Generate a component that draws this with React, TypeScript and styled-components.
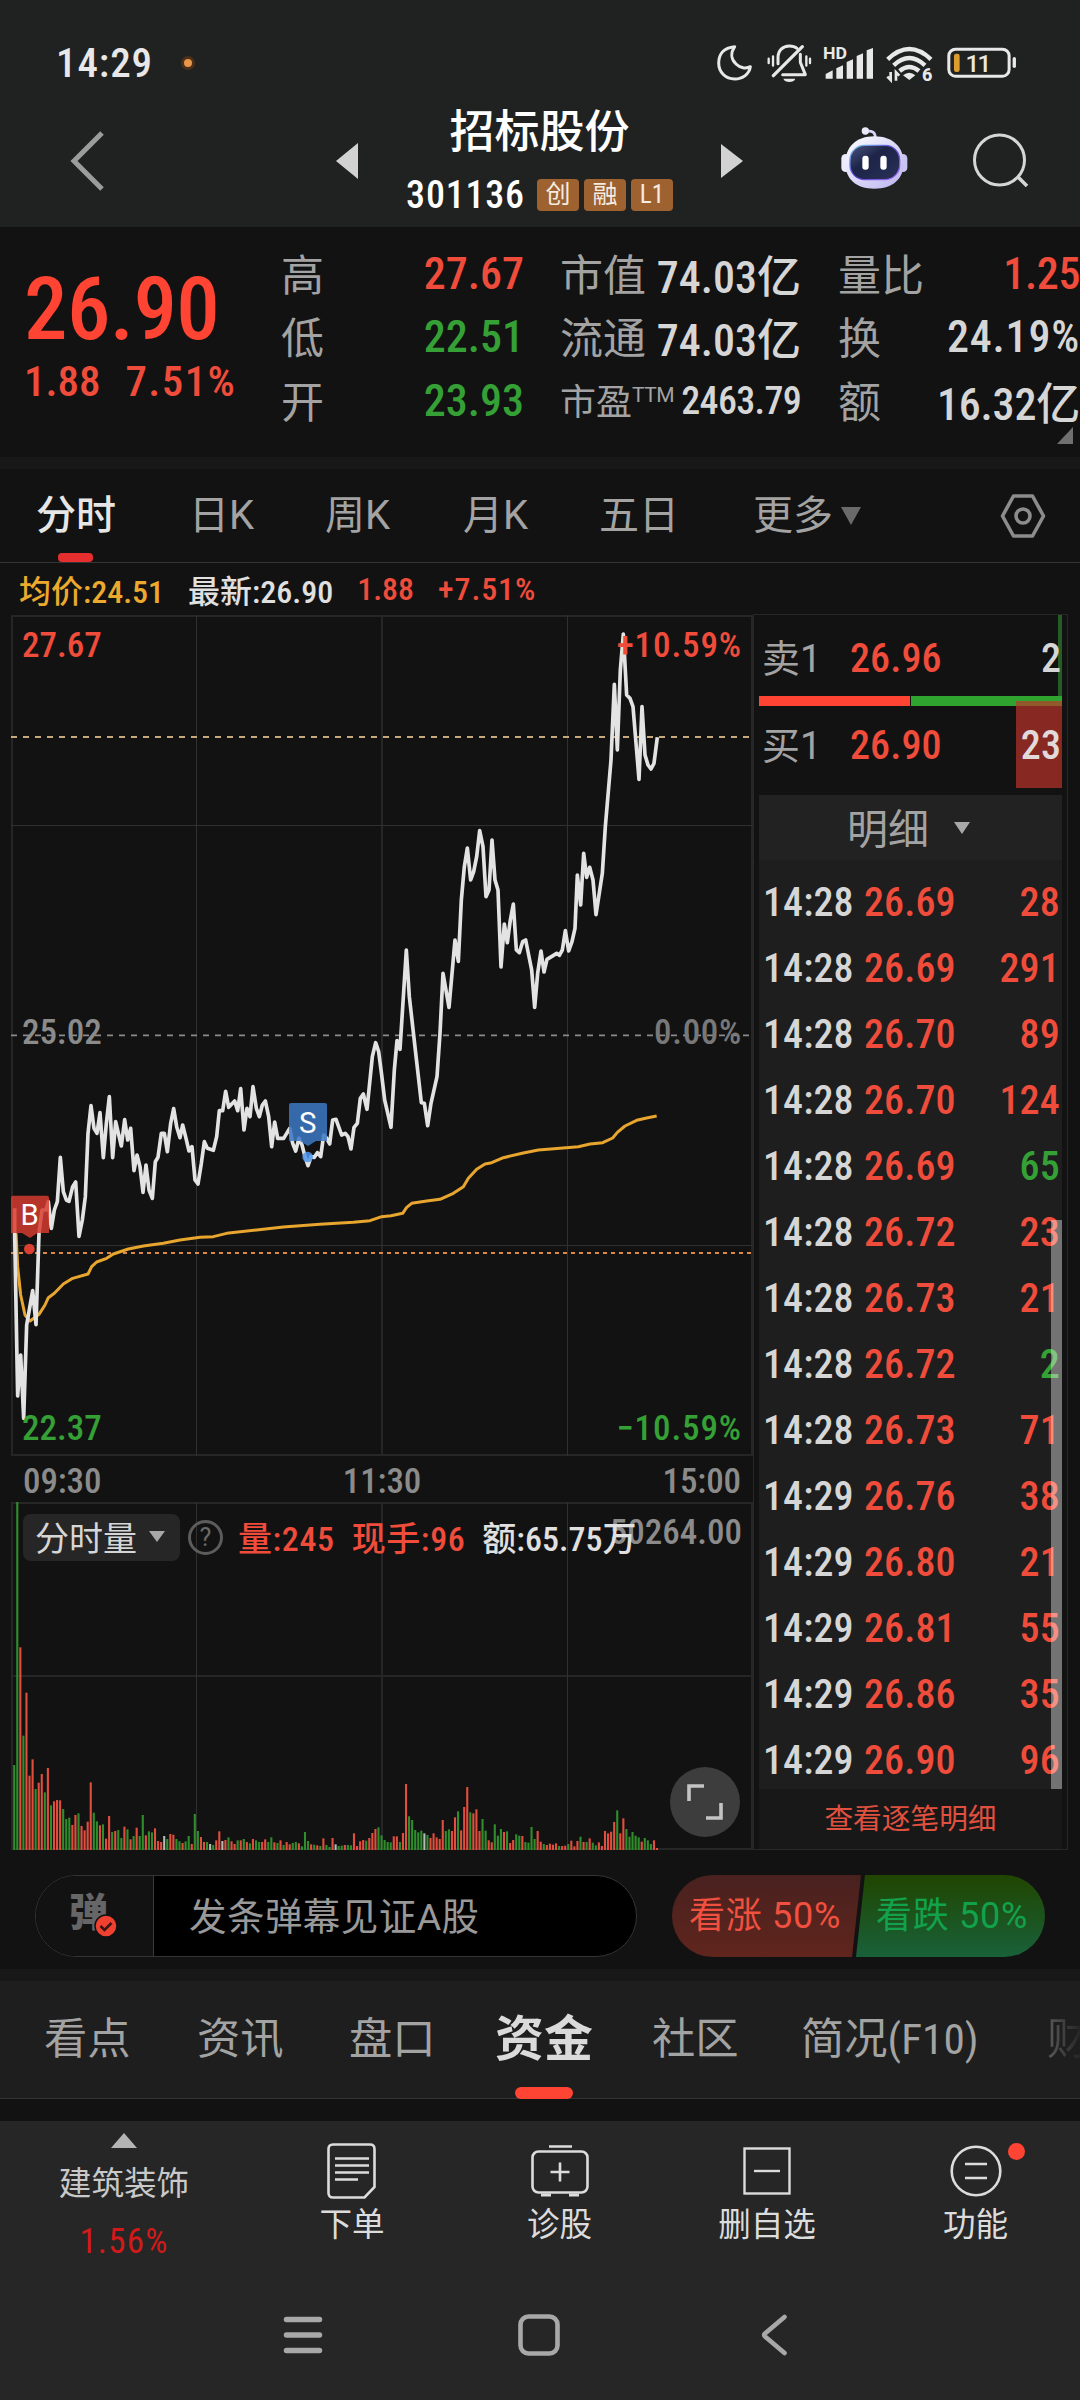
import React from 'react';
import styled, { createGlobalStyle, css } from 'styled-components';

const RED = '#ef4c3b';
const GREEN = '#35a035';
const WHITE = '#d6d6d6';
const GREY = '#a3a3a3';

const GlobalStyle = createGlobalStyle`
  * { box-sizing: border-box; }
  body {
    margin: 0;
    background: #121212;
    font-family: Roboto, "Noto Sans CJK SC", sans-serif;
    color: ${WHITE};
  }
  svg { display: block; }
`;

const Screen = styled.main`
  width: 1080px;
  height: 2400px;
  display: flex;
  flex-direction: column;
  background: #121212;
  overflow: hidden;
`;

type TextProps = { $size: number; $color?: string; $weight?: number; $ls?: number; $lift?: number };

const Label = styled.span<TextProps>`
  font-size: ${(p) => p.$size}px;
  color: ${(p) => p.$color ?? GREY};
  font-weight: ${(p) => p.$weight ?? 400};
  letter-spacing: ${(p) => p.$ls ?? 0}px;
  padding-bottom: ${(p) => p.$lift ?? 0}px;
  white-space: nowrap;
`;

const Num = styled(Label)`
  font-stretch: 87%;
  font-weight: ${(p) => p.$weight ?? 500};
`;

/* ---------- header ---------- */

const Header = styled.header`
  height: 227px;
  flex: none;
  background: #202221;
`;

const StatusBar = styled.div`
  height: 102px;
  padding: 24px 63px 0 56px;
  display: flex;
  align-items: center;
`;

const StatusDot = styled.i`
  width: 14px;
  height: 14px;
  margin-left: 28px;
  margin-right: auto;
  border-radius: 50%;
  background: #e8964a;
  border: 3px solid #4a3018;
`;

const TitleBar = styled.div`
  height: 125px;
  padding-bottom: 8px;
  display: grid;
  grid-template-columns: 336px 22px 363px 22px 98px 68px 63px 108px;
  align-items: center;
`;

const BackCell = styled.div`
  padding-left: 70px;
`;

const TitleBlock = styled.div`
  align-self: start;
  display: flex;
  flex-direction: column;
  align-items: center;
`;

const Title = styled.h1`
  margin: 3px 0 0;
  font-size: 45px;
  line-height: 56px;
  font-weight: 500;
  color: #fff;
`;

const CodeRow = styled.div`
  margin-top: 16px;
  height: 36px;
  display: flex;
  align-items: center;
  gap: 5px;
`;

const Badge = styled.span`
  width: 42px;
  height: 32px;
  border-radius: 4px;
  background: #9e6231;
  color: #f6ece2;
  font-size: 25px;
  font-stretch: 87%;
  line-height: 31px;
  text-align: center;
`;

/* ---------- quote ---------- */

const Quote = styled.section`
  position: relative;
  height: 230px;
  flex: none;
  display: grid;
  grid-template-columns: 254px 243px 241px 242px;
  column-gap: 0;
  padding-left: 27px;
`;

const PriceCol = styled.div`
  margin-left: -3px;
  padding-top: 37px;
`;

const Price = styled.div`
  font-size: 87px;
  line-height: 90px;
  font-weight: 500;
  font-stretch: 87%;
  color: #ff4433;
  letter-spacing: -0.6px;
`;

const ChangeRow = styled.div`
  display: flex;
  height: 53px;
  align-items: center;
  gap: 25px;
`;

const StatCol = styled.dl<{ $offset: number }>`
  margin: 0 ${(p) => -p.$offset}px 0 ${(p) => p.$offset}px;
  padding-top: 15px;
`;

const StatRow = styled.div`
  height: 63.6px;
  display: flex;
  align-items: center;
  justify-content: space-between;
`;

const Corner = styled.i`
  position: absolute;
  left: 1057px;
  top: 200px;
  border-left: 16px solid transparent;
  border-bottom: 17px solid #707070;
`;

const Band = styled.div`
  height: 12px;
  flex: none;
  background: #181818;
`;

/* ---------- period tabs ---------- */

const PeriodTabs = styled.nav`
  height: 94px;
  flex: none;
  padding-left: 36px;
  border-bottom: 1px solid #343434;
  display: grid;
  grid-template-columns: 153px 136px 138px 136px 154px 247px 1fr;
`;

const Tab = styled.div<{ $active?: boolean }>`
  font-size: 40px;
  line-height: 92px;
  white-space: nowrap;
  display: flex;
  align-items: center;
  color: ${(p) => (p.$active ? '#e6e6e6' : '#a3a3a3')};
  ${(p) =>
    p.$active &&
    css`
      position: relative;
      font-weight: 500;
      &::after {
        content: '';
        position: absolute;
        left: 22px;
        bottom: 0;
        width: 35px;
        height: 9px;
        border-radius: 4px;
        background: #e62e2e;
      }
    `}
`;

const Caret = styled.i<{ $w: number; $h: number; $color: string; $up?: boolean }>`
  width: 0;
  height: 0;
  border-left: ${(p) => p.$w / 2}px solid transparent;
  border-right: ${(p) => p.$w / 2}px solid transparent;
  ${(p) =>
    p.$up
      ? css`border-bottom: ${p.$h}px solid ${p.$color};`
      : css`border-top: ${p.$h}px solid ${p.$color};`}
`;

const InfoRow = styled.div`
  height: 51px;
  flex: none;
  padding: 0 0 0 19px;
  display: flex;
  align-items: center;
  gap: 24px;
`;

/* ---------- chart area ---------- */

const Main = styled.section`
  height: 1236px;
  flex: none;
  display: flex;
`;

const ChartCol = styled.div`
  width: 753px;
  padding: 1px 0 0 11px;
  display: flex;
  flex-direction: column;
`;

const PriceBox = styled.div`
  position: relative;
  height: 841px;
`;

const AxisLabel = styled(Num)<{ $top: number; $right?: boolean }>`
  position: absolute;
  top: ${(p) => p.$top}px;
  line-height: 40px;
  ${(p) => (p.$right ? 'right: 11px;' : 'left: 11px;')}
`;

const TimeAxis = styled.div`
  height: 46px;
  padding: 5px 12px 0 12px;
  display: flex;
  align-items: center;
  justify-content: space-between;
`;

const VolumeBox = styled.div`
  position: relative;
  height: 348px;
`;

const VolumeBar = styled.div`
  position: absolute;
  left: 12px;
  top: 12px;
  height: 47px;
  display: flex;
  align-items: center;
`;

const Picker = styled.div`
  width: 157px;
  height: 47px;
  padding: 0 15px 3px 12px;
  border-radius: 8px;
  background: #262626;
  display: flex;
  align-items: center;
  justify-content: space-between;
`;

const Help = styled.div`
  width: 35px;
  height: 35px;
  margin: 0 15px 0 8px;
  border: 3px solid #5c5c5c;
  border-radius: 50%;
  color: #6a6a6a;
  font-size: 25px;
  line-height: 30px;
  text-align: center;
`;

const Figures = styled.div`
  padding-bottom: 3px;
  display: flex;
  gap: 17px;
`;

const Expand = styled.div`
  position: absolute;
  left: 659px;
  top: 265px;
  width: 70px;
  height: 70px;
  border-radius: 50%;
  background: #3d3d3d;
  display: grid;
  place-items: center;
`;

/* ---------- order book ---------- */

const Book = styled.aside`
  width: 315px;
  border: 1px solid #282828;
  padding: 0 5px;
  display: flex;
  flex-direction: column;
`;

const BookRow = styled.div<{ $h: number; $pt?: number; $pb?: number }>`
  position: relative;
  height: ${(p) => p.$h}px;
  padding: ${(p) => p.$pt ?? 0}px 1px ${(p) => p.$pb ?? 0}px 3px;
  display: grid;
  grid-template-columns: 88px 1fr auto;
  align-items: center;
`;

const SellTick = styled.i`
  position: absolute;
  right: 0;
  top: 0;
  width: 4px;
  height: 81px;
  background: #265c26;
`;

const BuyFlash = styled.i`
  position: absolute;
  right: 0;
  top: -5px;
  width: 46px;
  height: 87px;
  background: rgba(196, 52, 42, 0.66);
`;

const Front = styled(Num)`
  position: relative;
`;

const Ratio = styled.div`
  height: 10px;
  display: grid;
  grid-template-columns: 1fr 1fr;
  column-gap: 1px;
`;

const RatioPart = styled.i<{ $color: string }>`
  background: ${(p) => p.$color};
`;

const DetailHead = styled.div`
  height: 65px;
  background: #222;
  padding-left: 88px;
  display: flex;
  align-items: center;
  gap: 25px;
`;

const TradeList = styled.div`
  position: relative;
  height: 929px;
  padding-top: 9px;
  background: #1e1e1e;
  overflow: hidden;
`;

const Trade = styled.div`
  height: 66.05px;
  padding: 0 2px 0 4px;
  display: grid;
  grid-template-columns: 101px 1fr auto;
  align-items: center;
`;

const Scrollbar = styled.i`
  position: absolute;
  right: 0;
  top: 360px;
  bottom: 0;
  width: 11px;
  background: rgba(255, 255, 255, 0.38);
`;

const MoreTrades = styled.div`
  flex: 1;
  background: #181818;
  color: #e0503f;
  font-size: 28.7px;
  line-height: 60px;
  text-align: center;
`;

/* ---------- comment bar ---------- */

const CommentBar = styled.section`
  height: 119px;
  flex: none;
  padding: 25px 35px 12px;
  display: flex;
  justify-content: space-between;
`;

const Pill = styled.div`
  width: 602px;
  height: 82px;
  border: 1px solid #343434;
  border-radius: 41px;
  background: #000;
  display: flex;
  align-items: center;
  overflow: hidden;
`;

const PillToggle = styled.div`
  position: relative;
  width: 118px;
  height: 80px;
  padding: 0 0 3px 33px;
  border-right: 1px solid #3a3a3a;
  background: #121212;
  font-size: 39px;
  line-height: 75px;
  font-weight: 900;
  color: #666;
`;

const ToggleCheck = styled.div`
  position: absolute;
  left: 58px;
  top: 38px;
`;

const PillText = styled.span`
  padding: 0 0 5px 35px;
  font-size: 37.5px;
  letter-spacing: 0.45px;
  color: #999;
`;

const Votes = styled.div`
  width: 373px;
  height: 82px;
  display: flex;
`;

const Vote = styled.div<{ $up?: boolean }>`
  width: 189px;
  height: 82px;
  line-height: 82px;
  font-size: 36px;
  white-space: nowrap;
  letter-spacing: 0.7px;
  ${(p) =>
    p.$up
      ? css`
          padding-left: 17px;
          color: #f0503f;
          border-radius: 41px 0 0 41px;
          background: linear-gradient(#48211f, #60251d);
          clip-path: polygon(0 0, 100% 0, 180px 100%, 0 100%);
        `
      : css`
          margin-left: -5px;
          padding-left: 20px;
          color: #12a24c;
          border-radius: 0 41px 41px 0;
          background: linear-gradient(#204500, #19613a);
          clip-path: polygon(9px 0, 100% 0, 100% 100%, 0 100%);
        `}
`;

/* ---------- section tabs ---------- */

const SectionTabs = styled.nav`
  height: 118px;
  flex: none;
  padding-left: 44px;
  background: #1e1e1e;
  border-bottom: 1px solid #343434;
  display: grid;
  grid-template-columns: 153px 152px 146px 157px 149px 246px 33px;
`;

const SectionTab = styled.div<{ $active?: boolean; $fade?: boolean }>`
  position: relative;
  font-size: ${(p) => (p.$active ? 49 : 43.3)}px;
  font-weight: ${(p) => (p.$active ? 700 : 400)};
  font-stretch: 87%;
  line-height: 118px;
  white-space: nowrap;
  color: ${(p) => (p.$active ? '#dadada' : '#a3a3a3')};
  ${(p) =>
    p.$fade &&
    css`
      overflow: hidden;
      color: transparent;
      background: linear-gradient(90deg, #5a5a5a, #262626);
      background-clip: text;
      -webkit-background-clip: text;
    `}
  ${(p) =>
    p.$active &&
    css`
      &::after {
        content: '';
        position: absolute;
        left: 20px;
        bottom: 0;
        width: 58px;
        height: 12px;
        border-radius: 6px;
        background: #ff4433;
      }
    `}
`;

/* ---------- bottom ---------- */

const Bottom = styled.footer`
  margin-top: 22px;
  flex: 1;
  background: #262626;
`;

const ActionRow = styled.div`
  height: 150px;
  display: grid;
  grid-template-columns: 248px 208px 207px 208px 209px;
`;

const Industry = styled.div`
  padding-top: 12px;
  display: flex;
  flex-direction: column;
  align-items: center;
`;

const IndustryName = styled.span`
  margin-top: 12px;
  font-size: 32.6px;
  line-height: 48px;
  color: #c9c9c9;
`;

const IndustryChange = styled.span`
  margin-top: 9px;
  font-size: 35px;
  line-height: 50px;
  font-stretch: 87%;
  letter-spacing: 1.2px;
  color: #d21a1a;
`;

const Action = styled.div`
  padding-top: 19px;
  display: flex;
  flex-direction: column;
  align-items: center;
  font-size: 32.6px;
  line-height: 46px;
  color: #dcdcdc;
`;

const ActionIcon = styled.div`
  position: relative;
  height: 62px;
  display: grid;
  place-items: center;
`;

const AlertDot = styled.i`
  position: absolute;
  right: -23px;
  top: 3px;
  width: 17px;
  height: 17px;
  border-radius: 50%;
  background: #ff4433;
`;

const SystemNav = styled.div`
  height: 127px;
  padding-left: 283px;
  display: flex;
  align-items: center;
  gap: 195px;
  & > :last-child { margin-left: 5px; }
`;

/* ---------- data ---------- */

type Pt = [number, number];

const shift = (dx: number, dy: number, pts: Pt[]): Pt[] => pts.map(([x, y]) => [x + dx, y + dy]);

/* Series are kept on a grid three times finer than a screen pixel. */
const PRICE: Pt[] = [
  ...shift(0, 3060, [
    [44, 565], [44, 640], [53, 1128], [62, 1005], [71, 1195], [80, 915], [98, 812], [108, 914], [117, 640],
    [126, 570], [138, 570], [145, 545], [154, 625], [163, 570], [172, 545], [181, 412], [190, 515], [199, 540],
    [207, 544], [218, 500], [227, 486], [237, 649], [247, 600], [256, 530], [264, 340], [273, 257], [282, 325],
    [291, 340], [300, 278], [310, 413], [319, 310], [328, 230], [338, 413], [347, 305], [364, 378], [374, 299],
    [383, 360], [392, 325], [402, 452], [411, 405], [420, 440], [429, 517], [438, 435], [447, 510], [457, 535],
    [466, 425], [474, 412], [484, 340], [493, 340], [502, 395], [512, 310], [521, 266], [530, 320], [540, 353],
    [548, 315], [558, 355], [567, 393], [576, 380], [585, 480], [594, 492], [604, 430], [613, 365], [622, 385],
    [640, 391], [650, 350], [658, 272], [668, 272], [677, 214], [686, 262], [704, 243], [713, 272], [722, 206],
    [732, 330], [741, 265], [750, 290], [759, 200], [769, 265], [778, 290], [787, 255], [796, 243], [806, 290],
    [815, 380], [824, 306], [833, 355], [851, 355], [869, 325], [878, 370], [887, 393], [897, 355], [906, 375],
    [915, 410], [924, 437], [933, 410], [943, 412], [952, 398], [962, 410], [971, 345], [980, 355], [989, 372],
    [998, 300], [1008, 298], [1025, 345], [1036, 340], [1044, 350], [1053, 387], [1062, 322], [1072, 310],
    [1081, 235], [1090, 222], [1101, 268], [1117, 110], [1127, 68], [1136, 95], [1145, 165], [1154, 240],
    [1173, 322], [1183, 150], [1191, 62], [1200, 88],
  ]),
  ...shift(1080, 1800, [
    [139, 1050], [148, 1190], [166, 1350], [184, 1508], [193, 1510], [203, 1577], [213, 1510], [231, 1430],
    [240, 1300], [249, 1120], [267, 1222], [285, 1020], [295, 1084], [304, 900], [313, 800], [322, 744],
    [332, 840], [341, 815], [350, 770], [359, 692], [369, 740], [378, 890], [387, 870], [396, 720], [405, 840],
    [414, 870], [423, 1101], [433, 972], [442, 1028], [451, 960], [460, 912], [469, 1050], [478, 1058],
    [488, 1025], [497, 1020], [515, 1110], [524, 1222], [533, 1120], [543, 1053], [552, 1116], [561, 1078],
    [590, 1060], [598, 1066], [607, 1050], [616, 992], [626, 1053], [636, 1025], [645, 985], [652, 825],
    [662, 915], [671, 760], [680, 832], [689, 802], [699, 840], [708, 944], [727, 820], [736, 680], [753, 480],
    [763, 253], [772, 450], [781, 210], [790, 102], [800, 285], [810, 295], [819, 320], [837, 538], [846, 320],
    [855, 465], [864, 495], [873, 507], [882, 490], [892, 412],
  ]),
];

const AVERAGE: Pt[] = [
  ...shift(0, 3060, [
    [48, 640], [53, 740], [62, 825], [75, 885], [90, 903], [117, 883], [135, 855], [145, 833], [163, 820],
    [190, 792], [218, 775], [264, 762], [275, 740], [290, 726], [320, 715], [340, 702], [385, 687], [430, 678],
    [490, 670], [540, 660], [600, 652], [640, 650], [680, 640], [770, 630], [850, 621], [960, 613], [1060, 607],
    [1110, 602], [1145, 590],
  ]),
  ...shift(1080, 3060, [
    [93, 587], [128, 580], [140, 562], [155, 550], [200, 543], [240, 538], [280, 520], [310, 500], [325, 475],
    [350, 448], [375, 432], [395, 428], [430, 413], [490, 399], [535, 390], [600, 385], [655, 380], [690, 372],
    [728, 368], [758, 354], [772, 337], [795, 318], [830, 301], [860, 294], [890, 288],
  ]),
];

const VOLUME =
  'g255 g1044 r608 g343 r472 r223 r272 g183 r202 r228 g173 r246 g134 r146 r150 r149 g123 g93 g97 r75 ' +
  'r105 g110 r72 r59 r85 r203 g112 g86 r74 g77 r34 r102 g54 r57 g60 g36 r70 g62 r32 g42 ' +
  'r67 g42 g105 r44 g56 g53 r65 r27 r24 w42 g33 r48 r46 g33 g26 r21 g26 g42 r18 g108 ' +
  'g57 r39 r24 g24 w18 g15 r29 r56 w27 r30 g38 r26 r18 g29 r29 g33 r24 g20 r33 g29 ' +
  'g24 r24 r32 g24 g38 r23 g21 r29 g15 r24 r17 g21 g24 r20 g11 g54 g27 r17 g16 r14 ' +
  'g12 r35 g15 g9 r36 w17 g12 g13 r15 g15 g14 r50 r12 r26 r30 g28 r36 r51 r63 g68 ' +
  'g44 g30 g24 g23 r41 r41 g24 r51 r198 g101 g90 g60 g53 g58 w50 g45 r36 r50 r38 r33 ' +
  'r90 g57 g62 r57 r98 g116 r59 r129 r189 g113 r110 r122 r57 g93 g58 r29 r23 g77 g43 g63 ' +
  'r54 g56 r21 r30 g47 g43 r42 g24 g22 g69 g33 r57 r25 g18 r15 r19 r16 r20 g12 r12 ' +
  'r13 g18 r28 r11 r27 g40 r24 g24 r35 g22 g14 r23 r12 r57 r50 r55 r84 g119 r50 r95 ' +
  'g63 g40 g54 g43 g38 r25 g36 g29 g18 r29 r6';

const VOLUME_COLORS: Record<string, string> = { r: '#e04e3e', g: '#2f8e2b', w: '#b8b8b8' };

const BARS = VOLUME.split(' ').map((b, i) => ({
  x: 39.5 + i * 9.183,
  h: Number(b.slice(1)),
  color: VOLUME_COLORS[b[0]],
}));

const TRADES: [string, string, string, boolean?][] = [
  ['14:28', '26.69', '28'],
  ['14:28', '26.69', '291'],
  ['14:28', '26.70', '89'],
  ['14:28', '26.70', '124'],
  ['14:28', '26.69', '65', true],
  ['14:28', '26.72', '23'],
  ['14:28', '26.73', '21'],
  ['14:28', '26.72', '2', true],
  ['14:28', '26.73', '71'],
  ['14:29', '26.76', '38'],
  ['14:29', '26.80', '21'],
  ['14:29', '26.81', '55'],
  ['14:29', '26.86', '35'],
  ['14:29', '26.90', '96'],
];

const toPoints = (pts: Pt[]) => pts.map((p) => p.join(',')).join(' ');

/* ---------- drawings ---------- */

const StatusIcons = () => (
  <svg width="301.33" height="40.67" viewBox="50 70 904 122" fill="none" stroke="#e8e8e8">
    <path
      d="M106 81C72 84 58 105 58 130C58 158 79 178 106 178C130 178 150 163 153 141C140 148 122 145 110 133C94 118 94 98 106 81Z"
      strokeWidth="9"
      strokeLinejoin="round"
    />
    <g strokeWidth="9" strokeLinecap="round">
      <path d="M236 132V114C236 92 250 79 270 79C279 79 287 81 293 86" />
      <path d="M303 104V128L318 165H250" strokeLinejoin="round" />
      <path d="M222 168L309 81" strokeWidth="10" />
      <path d="M208 117V130M221 110V138M321 110V138M332 117V130" strokeWidth="7" />
      <path d="M252 177H288C284 190 256 190 252 177Z" fill="#e8e8e8" stroke="none" />
    </g>
    <g fill="#e8e8e8" stroke="none">
      <path d="M379 177V163L400 152V177ZM411 177V146L431 137V177ZM442 177V127L461 119V177ZM472 177V109L491 101V177ZM502 177V92L521 85V177Z" strokeLinejoin="round" />
      <text x="371" y="117" fontSize="48" fontWeight="700" textLength="72" lengthAdjust="spacingAndGlyphs">HD</text>
      <path d="M611 167Q630 151 648 167L630 181Z" />
      <text x="668" y="185" fontSize="54" fontWeight="800">6</text>
      <rect x="764" y="102" width="17" height="55" rx="7" fill="#dd9d2e" />
      <text x="799" y="156" fontSize="73" fontWeight="500" letterSpacing="-6">11</text>
    </g>
    <path d="M565 119Q630 57 695 119M583 137Q630 93 677 137M601 154Q630 130 659 154" strokeWidth="13" />
    <path d="M574 157V181L564 171M590 183V158L600 168" strokeWidth="8" />
    <rect x="748.5" y="88.5" width="181" height="81" rx="20" strokeWidth="9" />
    <path d="M945 117V140" strokeWidth="10" strokeLinecap="round" />
  </svg>
);

const RobotArt = styled.svg`
  margin-top: -5px;
`;

const Robot = () => (
  <RobotArt width="67" height="62" viewBox="425 322 201 186">
    <defs>
      <linearGradient id="shell" x1="0" y1="0" x2="1" y2="1">
        <stop offset="0" stopColor="#ffffff" />
        <stop offset="1" stopColor="#b9b2f0" />
      </linearGradient>
      <linearGradient id="rim" x1="0" y1="0" x2="1" y2="1">
        <stop offset="0" stopColor="#7fd0f0" />
        <stop offset="0.5" stopColor="#5a3fd0" />
        <stop offset="1" stopColor="#a070f0" />
      </linearGradient>
      <linearGradient id="visor" x1="0" y1="0" x2="1" y2="1">
        <stop offset="0" stopColor="#4a5580" />
        <stop offset="0.4" stopColor="#1d2448" />
        <stop offset="1" stopColor="#2a3158" />
      </linearGradient>
    </defs>
    <path d="M528 356C529 338 518 332 500 335" fill="none" stroke="#d8d4f5" strokeWidth="8" />
    <circle cx="498" cy="334" r="11" fill="#ebe9fb" />
    <rect x="426" y="403" width="26" height="54" rx="13" fill="#eceafc" />
    <rect x="598" y="403" width="26" height="54" rx="13" fill="#c9c4f4" />
    <path d="M525 350C580 350 613 383 613 430C613 478 580 507 525 507C470 507 438 478 438 430C438 383 470 350 525 350Z" fill="url(#shell)" />
    <rect x="452" y="377" width="149" height="103" rx="44" fill="url(#visor)" stroke="url(#rim)" strokeWidth="4" />
    <rect x="489" y="408" width="19" height="42" rx="9" fill="#fff" />
    <rect x="543" y="408" width="19" height="42" rx="9" fill="#fff" />
  </RobotArt>
);

const PriceChart = () => (
  <svg width="742" height="841" viewBox="33 1845 2226 2523" fill="none">
    <g stroke="#262626" strokeWidth="6">
      <rect x="36" y="1848" width="2220" height="2517" />
      <path d="M1146 1845V4368" />
    </g>
    <path d="M589.5 1845V4368M1702.5 1845V4368M33 2476.5H2259M33 3736.5H2259" stroke="#303030" strokeWidth="3" />
    <path d="M33 2211H2259" stroke="#c8a97c" strokeWidth="6" strokeDasharray="18 18" />
    <path d="M33 3106H2259" stroke="#8a8a8a" strokeWidth="5" strokeDasharray="18 18" />
    <path d="M33 3759H2259" stroke="#d98a4a" strokeWidth="6" strokeDasharray="12 12" />
    <polyline points={toPoints(AVERAGE)} stroke="#e8a62f" strokeWidth="9" strokeLinejoin="round" />
    <polyline points={toPoints(PRICE)} stroke="#e3e3e3" strokeWidth="11" strokeLinejoin="round" />
    <path d="M39 3587H141Q147 3587 147 3593V3699H112L90 3714L66 3699H33V3593Q33 3587 39 3587Z" fill="#d63c2e" fillOpacity="0.84" />
    <circle cx="88" cy="3747" r="16" fill="#d9402f" />
    <path d="M873 3309H975Q981 3309 981 3315V3423H948L924 3438L900 3423H867V3315Q867 3309 873 3309Z" fill="#3c78c4" fillOpacity="0.86" />
    <circle cx="923" cy="3471" r="16" fill="#5096f0" fillOpacity="0.85" />
    <g fill="#fff" fontSize="88" textAnchor="middle">
      <text x="89" y="3675">B</text>
      <text x="923" y="3398">S</text>
    </g>
  </svg>
);

const VolumeChart = () => (
  <svg width="742" height="348" viewBox="33 4506 2226 1044" fill="none">
    <g stroke="#262626" strokeWidth="6">
      <rect x="36" y="4509" width="2220" height="1038" />
      <path d="M1146 4506V5550M33 5028H2259" />
    </g>
    <path d="M589.5 4506V5550M1702.5 4506V5550" stroke="#303030" strokeWidth="3" />
    {BARS.map((b, i) => (
      <rect key={i} x={b.x} y={5550 - b.h} width="6.3" height={b.h} fill={b.color} />
    ))}
  </svg>
);

const TradeOrderIcon = () => (
  <svg width="50" height="56" viewBox="0 0 50 56" fill="none" stroke="#dcdcdc" strokeWidth="2.6">
    <path d="M6 1.5H43Q47.5 1.5 47.5 6V44L37.5 54.5H6Q1.5 54.5 1.5 50V6Q1.5 1.5 6 1.5Z" />
    <path d="M8 15.5H42M8 22.5H42M8 29.5H42M8 36.5H31" />
  </svg>
);

const DiagnoseIcon = () => (
  <svg width="58" height="54" viewBox="0 0 58 54" fill="none" stroke="#dcdcdc" strokeWidth="2.6">
    <rect x="1.5" y="7.5" width="55" height="41" rx="6" />
    <path d="M18 2.5H41M19.5 28H38.5M29 18.5V37.5" />
    <path d="M10 51H20M38 51H48" strokeWidth="3" />
  </svg>
);

const RemoveIcon = () => (
  <svg width="48" height="48" viewBox="0 0 48 48" fill="none" stroke="#dcdcdc" strokeWidth="2.4">
    <rect x="1.5" y="1.5" width="45" height="45" />
    <path d="M11 24H37" />
  </svg>
);

const MenuIcon = () => (
  <svg width="52" height="52" viewBox="0 0 52 52" fill="none" stroke="#dcdcdc" strokeWidth="2.6">
    <circle cx="26" cy="26" r="24.3" />
    <path d="M15 19H37M15 33H37" />
  </svg>
);

const Code = styled(Num)`
  margin-right: 7px;
`;

const Sup = styled.sup`
  font-size: 21px;
  line-height: 0;
  letter-spacing: -0.5px;
`;

const MoreCaret = styled(Caret)`
  margin-left: 8px;
`;

const Stat = ({ label, value, color = WHITE, ls = 0 }: { label: string; value: string; color?: string; ls?: number }) => (
  <StatRow>
    <Label $size={43} $lift={4}>{label}</Label>
    <Num $size={44} $color={color} $ls={ls}>{value}</Num>
  </StatRow>
);

export default function App() {
  return (
    <>
      <GlobalStyle />
      <Screen>
        <Header>
          <StatusBar>
            <Num $size={41} $color="#e8e8e8" $ls={0.9}>14:29</Num>
            <StatusDot />
            <StatusIcons />
          </StatusBar>
          <TitleBar>
            <BackCell>
              <svg width="36" height="60" viewBox="0 0 36 60" fill="none" stroke="#9c9c9c" strokeWidth="5">
                <path d="M32 2L4 30L32 58" />
              </svg>
            </BackCell>
            <svg width="22" height="36" viewBox="0 0 22 36" fill="#d2d2d2"><path d="M22 0V36L0 18Z" /></svg>
            <TitleBlock>
              <Title>招标股份</Title>
              <CodeRow>
                <Code $size={38} $color="#fff" $ls={0.8}>301136</Code>
                <Badge>创</Badge>
                <Badge>融</Badge>
                <Badge>L1</Badge>
              </CodeRow>
            </TitleBlock>
            <svg width="22" height="34" viewBox="0 0 22 34" fill="#d2d2d2"><path d="M0 0V34L22 17Z" /></svg>
            <span />
            <Robot />
            <span />
            <svg width="57" height="57" viewBox="0 0 57 57" fill="none" stroke="#d6d6d6" strokeWidth="3">
              <circle cx="27.5" cy="28" r="25" />
              <path d="M46 45L55 54" strokeWidth="3.6" />
            </svg>
          </TitleBar>
        </Header>

        <Quote>
          <PriceCol>
            <Price>26.90</Price>
            <ChangeRow>
              <Num $size={43} $color={RED} $ls={0}>1.88</Num>
              <Num $size={43} $color={RED} $ls={1.4}>7.51%</Num>
            </ChangeRow>
          </PriceCol>
          <StatCol $offset={0}>
            <Stat label="高" value="27.67" color={RED} />
            <Stat label="低" value="22.51" color={GREEN} />
            <Stat label="开" value="23.93" color={GREEN} />
          </StatCol>
          <StatCol $offset={36}>
            <Stat label="市值" value="74.03亿" ls={0} />
            <Stat label="流通" value="74.03亿" ls={0} />
            <StatRow>
              <Label $size={36} $lift={4}>
                市盈<Sup>TTM</Sup>
              </Label>
              <Num $size={38} $color={WHITE} $ls={-0.7}>2463.79</Num>
            </StatRow>
          </StatCol>
          <StatCol $offset={73}>
            <Stat label="量比" value="1.25" color={RED} ls={-0.4} />
            <Stat label="换" value="24.19%" ls={0.8} />
            <Stat label="额" value="16.32亿" ls={-0.2} />
          </StatCol>
          <Corner />
        </Quote>

        <Band />

        <PeriodTabs>
          <Tab $active>分时</Tab>
          <Tab>日K</Tab>
          <Tab>周K</Tab>
          <Tab>月K</Tab>
          <Tab>五日</Tab>
          <Tab>
            更多
            <MoreCaret $w={21} $h={18} $color="#6a6a6a" />
          </Tab>
          <Tab>
            <svg width="46" height="44" viewBox="0 0 46 44" fill="none" stroke="#8c8c8c" strokeWidth="3.6">
              <path d="M13.5 2H32.5L43.5 22L32.5 42H13.5L2.5 22Z" strokeLinejoin="round" />
              <circle cx="23" cy="22" r="7" />
            </svg>
          </Tab>
        </PeriodTabs>

        <InfoRow>
          <Num $size={32} $color="#eba92e" $ls={0}>均价:24.51</Num>
          <Num $size={32} $color="#e0e0e0" $ls={0}>最新:26.90</Num>
          <Num $size={32} $color={RED} $ls={0}>1.88</Num>
          <Num $size={32} $color={RED} $ls={0.9}>+7.51%</Num>
        </InfoRow>

        <Main>
          <ChartCol>
            <PriceBox>
              <PriceChart />
              <AxisLabel $size={35} $color={RED} $ls={0} $top={11}>27.67</AxisLabel>
              <AxisLabel $size={35} $color={RED} $ls={0.9} $top={11} $right>+10.59%</AxisLabel>
              <AxisLabel $size={35} $color="#8b8b8b" $ls={0} $top={398}>25.02</AxisLabel>
              <AxisLabel $size={35} $color="#787878" $ls={0.7} $top={398} $right>0.00%</AxisLabel>
              <AxisLabel $size={35} $color={GREEN} $ls={0} $top={794}>22.37</AxisLabel>
              <AxisLabel $size={35} $color={GREEN} $ls={0.9} $top={794} $right>−10.59%</AxisLabel>
            </PriceBox>
            <TimeAxis>
              <Num $size={35} $color="#8b8b8b" $ls={-0.1}>09:30</Num>
              <Num $size={35} $color="#8b8b8b" $ls={-0.1}>11:30</Num>
              <Num $size={35} $color="#8b8b8b" $ls={-0.1}>15:00</Num>
            </TimeAxis>
            <VolumeBox>
              <VolumeChart />
              <AxisLabel $size={35} $color="#8b8b8b" $ls={0} $top={11} $right>50264.00</AxisLabel>
              <VolumeBar>
                <Picker>
                  <Label $size={34} $color={WHITE}>分时量</Label>
                  <Caret $w={17} $h={11} $color="#a8a8a8" />
                </Picker>
                <Help>?</Help>
                <Figures>
                  <Num $size={34} $color={RED} $ls={0.6}>量:245</Num>
                  <Num $size={34} $color={RED} $ls={0.6}>现手:96</Num>
                  <Num $size={34} $color="#e0e0e0" $ls={0}>额:65.75万</Num>
                </Figures>
              </VolumeBar>
              <Expand>
                <svg width="38" height="38" viewBox="0 0 38 38" fill="none" stroke="#c4c4c4" strokeWidth="3.6">
                  <path d="M3 18V3H18M35 20V35H20" />
                </svg>
              </Expand>
            </VolumeBox>
          </ChartCol>

          <Book>
            <BookRow $h={81} $pt={5}>
              <Label $size={38} $lift={6}>卖1</Label>
              <Num $size={40} $color={RED} $ls={0.1}>26.96</Num>
              <SellTick />
              <Front $size={40} $color={WHITE}>2</Front>
            </BookRow>
            <Ratio>
              <RatioPart $color="#ff4433" />
              <RatioPart $color="#2fa52f" />
            </Ratio>
            <BookRow $h={89} $pb={11}>
              <Label $size={38} $lift={6}>买1</Label>
              <Num $size={40} $color={RED} $ls={0.1}>26.90</Num>
              <BuyFlash />
              <Front $size={40} $color="#e2dada" $ls={0.1}>23</Front>
            </BookRow>
            <DetailHead>
              <Label $size={41} $lift={4}>明细</Label>
              <Caret $w={17} $h={12} $color="#a8a8a8" />
            </DetailHead>
            <TradeList>
              {TRADES.map(([time, price, vol, sell], i) => (
                <Trade key={i}>
                  <Num $size={40} $color={WHITE} $ls={0.1}>{time}</Num>
                  <Num $size={40} $color={RED} $ls={0.1}>{price}</Num>
                  <Num $size={40} $color={sell ? GREEN : RED} $ls={0.2}>{vol}</Num>
                </Trade>
              ))}
              <Scrollbar />
            </TradeList>
            <MoreTrades>查看逐笔明细</MoreTrades>
          </Book>
        </Main>

        <CommentBar>
          <Pill>
            <PillToggle>
              弹
              <ToggleCheck>
                <svg width="24" height="24" viewBox="0 0 24 24" fill="none">
                  <circle cx="12" cy="12" r="11" fill="#f04030" stroke="#121212" strokeWidth="1.5" />
                  <path d="M6.5 12L10.5 16L17.5 9" stroke="#3a1512" strokeWidth="2.6" />
                </svg>
              </ToggleCheck>
            </PillToggle>
            <PillText>发条弹幕见证A股</PillText>
          </Pill>
          <Votes>
            <Vote $up>看涨 50%</Vote>
            <Vote>看跌 50%</Vote>
          </Votes>
        </CommentBar>

        <Band />

        <SectionTabs>
          <SectionTab>看点</SectionTab>
          <SectionTab>资讯</SectionTab>
          <SectionTab>盘口</SectionTab>
          <SectionTab $active>资金</SectionTab>
          <SectionTab>社区</SectionTab>
          <SectionTab>简况(F10)</SectionTab>
          <SectionTab $fade>财</SectionTab>
        </SectionTabs>

        <Bottom>
          <ActionRow>
            <Industry>
              <Caret $up $w={27} $h={15} $color="#b4b4b4" />
              <IndustryName>建筑装饰</IndustryName>
              <IndustryChange>1.56%</IndustryChange>
            </Industry>
            <Action>
              <ActionIcon><TradeOrderIcon /></ActionIcon>
              下单
            </Action>
            <Action>
              <ActionIcon><DiagnoseIcon /></ActionIcon>
              诊股
            </Action>
            <Action>
              <ActionIcon><RemoveIcon /></ActionIcon>
              删自选
            </Action>
            <Action>
              <ActionIcon><MenuIcon /><AlertDot /></ActionIcon>
              功能
            </Action>
          </ActionRow>
          <SystemNav>
            <svg width="40" height="40" viewBox="0 0 40 40" stroke="#a8a8a8" strokeWidth="5.5" strokeLinecap="round">
              <path d="M3.5 4.5H36.5M3.5 20H36.5M3.5 35.5H36.5" />
            </svg>
            <svg width="42" height="42" viewBox="0 0 42 42" fill="none" stroke="#a8a8a8" strokeWidth="4.6">
              <rect x="2.5" y="2.5" width="37" height="37" rx="8" />
            </svg>
            <svg width="28" height="42" viewBox="0 0 28 42" fill="none" stroke="#a8a8a8" strokeWidth="4.6" strokeLinecap="round" strokeLinejoin="round">
              <path d="M24.5 3L5 19.5Q3.5 21 5 22.5L24.5 39" />
            </svg>
          </SystemNav>
        </Bottom>
      </Screen>
    </>
  );
}
